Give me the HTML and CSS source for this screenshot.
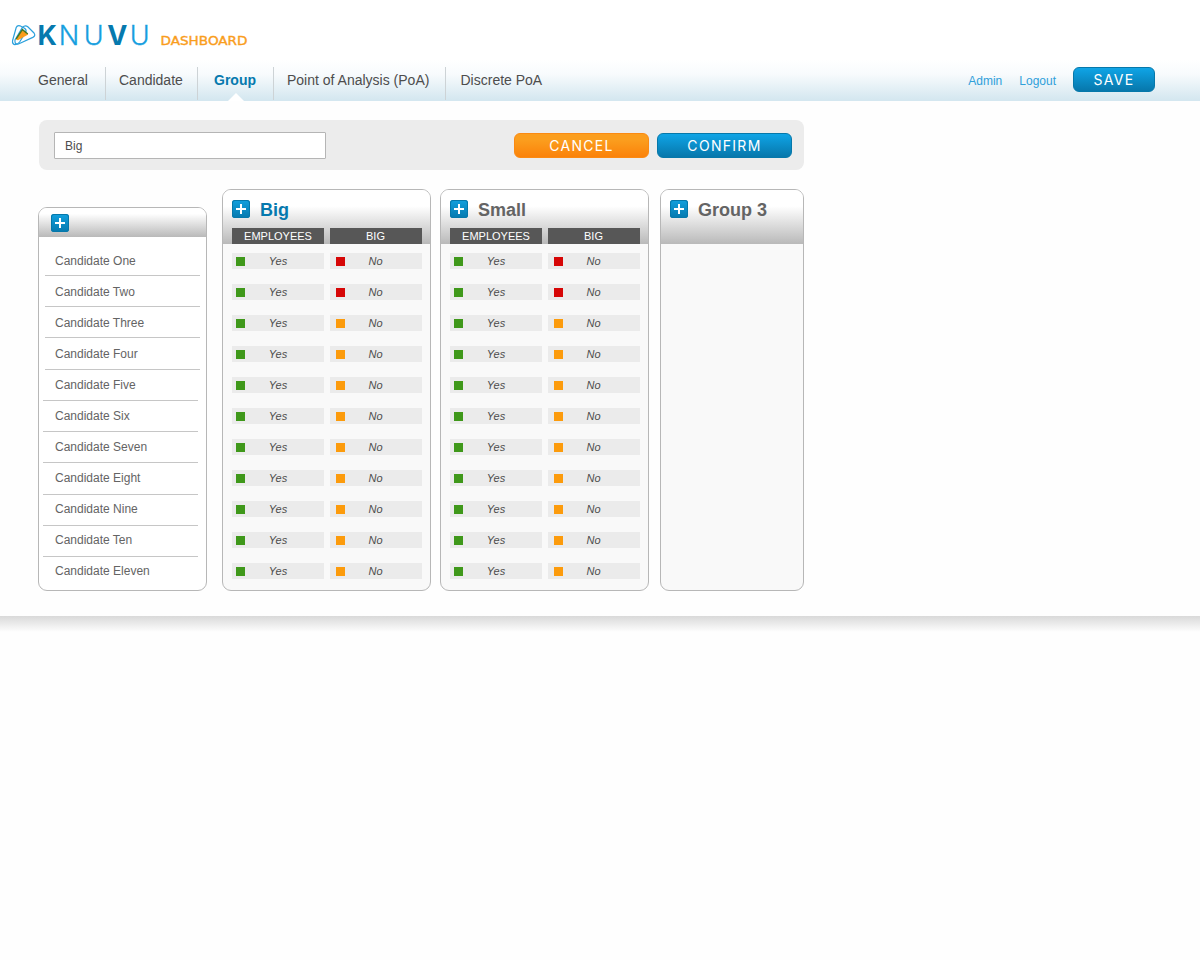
FILE: index.html
```html
<!DOCTYPE html>
<html lang="en">
<head>
<meta charset="utf-8">
<title>Knuvu Dashboard</title>
<link rel="stylesheet" href="styles.css">
</head>
<body>
<svg class="defs" width="0" height="0" aria-hidden="true">
  <symbol id="plus" viewBox="0 0 18 18">
    <path d="M8 4h2v4h4v2h-4v4H8v-4H4V8h4z" fill="#fff"/>
  </symbol>
</svg>
<header class="header">
  <div class="brand">
    <svg width="260" height="64" viewBox="0 0 260 64" role="img">
      <path d="M16.2 27.5Q17.2 25 20 25.8L24.5 28.2Q27 30 25.6 32.4L19.6 42Q17.5 44.8 14.8 44.6Q12 44 12.6 40.5Z" fill="none" stroke="#2aa0dc" stroke-width="1.2"/>
      <path d="M22.4 27.4Q25.2 24.6 27.8 26.8L34 33Q36 35.8 32.8 37.4L18.5 44Q14.4 45 15 40Z" fill="none" stroke="#2aa0dc" stroke-width="1.2"/>
      <path d="M16 39.8L22.2 30.2L28.2 34.4L18 40.2Z" fill="#f99d1c"/>
      <path d="M16.2 38.8L22.4 29.6L27.8 34" fill="none" stroke="#45751f" stroke-width="1.4"/>
      <g class="wordmark">
        <text x="37.5" y="45" class="bold">K</text>
        <text x="58.8" y="45" class="thin">N</text>
        <text x="83.8" y="45" class="thin">U</text>
        <text x="107.3" y="45" class="bold">V</text>
        <text x="129.8" y="45" class="thin">U</text>
      </g>
      <text x="160.5" y="45" class="sub" textLength="87" lengthAdjust="spacingAndGlyphs">DASHBOARD</text>
    </svg>
  </div>
  <div class="navbar">
    <nav class="tabs">
      <a class="tab general">General</a>
      <a class="tab candidate">Candidate</a>
      <a class="tab group active">Group</a>
      <a class="tab poa">Point of Analysis (PoA)</a>
      <a class="tab discrete">Discrete PoA</a>
    </nav>
    <div class="account">
      <a>Admin</a>
      <a>Logout</a>
      <button class="btn blue save">SAVE</button>
    </div>
  </div>
</header>
<main class="content">
  <section class="editbar">
    <input class="name" type="text" value="Big">
    <div class="actions">
      <button class="btn orange">CANCEL</button>
      <button class="btn blue">CONFIRM</button>
    </div>
  </section>
  <section class="board">
    <div class="card people">
      <div class="people-head"><svg class="add"><use href="#plus"/></svg></div>
      <ul class="names">
        <li>Candidate One</li>
        <li>Candidate Two</li>
        <li>Candidate Three</li>
        <li class="tall">Candidate Four</li>
        <li class="left">Candidate Five</li>
        <li class="left">Candidate Six</li>
        <li class="left">Candidate Seven</li>
        <li class="left tall">Candidate Eight</li>
        <li class="left">Candidate Nine</li>
        <li class="left">Candidate Ten</li>
        <li>Candidate Eleven</li>
      </ul>
    </div>
    <div class="card group-card first">
      <div class="head">
        <h2 class="current"><svg class="add"><use href="#plus"/></svg>Big</h2>
        <div class="cols"><span>EMPLOYEES</span><span>BIG</span></div>
      </div>
      <div class="rows">
        <div class="row"><span class="yes">Yes</span><span class="no">No</span></div>
        <div class="row"><span class="yes">Yes</span><span class="no">No</span></div>
        <div class="row"><span class="yes">Yes</span><span class="warn">No</span></div>
        <div class="row"><span class="yes">Yes</span><span class="warn">No</span></div>
        <div class="row"><span class="yes">Yes</span><span class="warn">No</span></div>
        <div class="row"><span class="yes">Yes</span><span class="warn">No</span></div>
        <div class="row"><span class="yes">Yes</span><span class="warn">No</span></div>
        <div class="row"><span class="yes">Yes</span><span class="warn">No</span></div>
        <div class="row"><span class="yes">Yes</span><span class="warn">No</span></div>
        <div class="row"><span class="yes">Yes</span><span class="warn">No</span></div>
        <div class="row"><span class="yes">Yes</span><span class="warn">No</span></div>
      </div>
    </div>
    <div class="card group-card second">
      <div class="head">
        <h2><svg class="add"><use href="#plus"/></svg>Small</h2>
        <div class="cols"><span>EMPLOYEES</span><span>BIG</span></div>
      </div>
      <div class="rows">
        <div class="row"><span class="yes">Yes</span><span class="no">No</span></div>
        <div class="row"><span class="yes">Yes</span><span class="no">No</span></div>
        <div class="row"><span class="yes">Yes</span><span class="warn">No</span></div>
        <div class="row"><span class="yes">Yes</span><span class="warn">No</span></div>
        <div class="row"><span class="yes">Yes</span><span class="warn">No</span></div>
        <div class="row"><span class="yes">Yes</span><span class="warn">No</span></div>
        <div class="row"><span class="yes">Yes</span><span class="warn">No</span></div>
        <div class="row"><span class="yes">Yes</span><span class="warn">No</span></div>
        <div class="row"><span class="yes">Yes</span><span class="warn">No</span></div>
        <div class="row"><span class="yes">Yes</span><span class="warn">No</span></div>
        <div class="row"><span class="yes">Yes</span><span class="warn">No</span></div>
      </div>
    </div>
    <div class="card group-card third">
      <div class="head">
        <h2><svg class="add"><use href="#plus"/></svg>Group 3</h2>
      </div>
    </div>
  </section>
</main>
<footer class="edge"></footer>
</body>
</html>
```
FILE: styles.css
```css
* { box-sizing: border-box; }
body {
  margin: 0;
  min-height: 960px;
  background: #fefefe;
  font-family: "Liberation Sans", Arial, sans-serif;
  color: #4d4d4d;
}
.defs { display: block; }
.header {
  height: 101px;
  background: linear-gradient(#fff 60px, #f8fbfd 74px, #d4e7f0 100px);
}
.brand { height: 67px; }
.brand svg { display: block; }
.wordmark { font-family: Inter, sans-serif; font-size: 27px; }
.wordmark .bold { font-weight: 700; fill: #0679ae; }
.wordmark .thin { font-weight: 300; fill: #169fdf; stroke: #169fdf; stroke-width: .3px; }
.sub { font-family: "DejaVu Sans", sans-serif; font-size: 12.5px; fill: #f99d1c; stroke: #f99d1c; stroke-width: .4px; }

.navbar { display: flex; justify-content: space-between; height: 34px; }
.tabs { display: flex; padding-left: 38px; }
.tab {
  height: 33px;
  padding-top: 5px;
  font-size: 14px;
  line-height: 16px;
  white-space: nowrap;
  border-right: 1px solid #cdd3d6;
}
.general { width: 68px; }
.candidate { width: 92px; padding-left: 13px; }
.group { width: 75px; padding-left: 16px; }
.poa { width: 173px; padding-left: 13px; border-left: 1px solid #cdd3d6; }
.discrete { padding-left: 14.5px; border: 0; }
.tab.active { position: relative; height: 34px; color: #0679ae; font-weight: bold; border: 0; }
.tab.active::after {
  content: "";
  position: absolute;
  left: 30px;
  bottom: 0;
  border: solid transparent;
  border-width: 0 8.5px 8px;
  border-bottom-color: #fff;
}
.account { display: flex; padding-right: 45px; gap: 17px; font-size: 12px; line-height: 28px; color: #2fa0da; }

.btn {
  width: 135px;
  height: 25px;
  padding: 0;
  border-radius: 6px;
  color: #fff;
  font: 14px/24px Inter, sans-serif;
  letter-spacing: 1.3px;
}
.blue { border: 1px solid #0678aa; background: linear-gradient(#0fa4e6, #0777ab); }
.orange { border: 1px solid #fb8a12; background: linear-gradient(#fb9e1e 25%, #fb820a); }
.save { width: 82px; }

.content { width: 804px; height: 515px; padding: 19px 0 0 38px; }
.editbar {
  display: flex;
  align-items: flex-start;
  justify-content: space-between;
  height: 50px;
  margin-left: 1px;
  padding: 12px 12px 0 15px;
  background: #ececec;
  border-radius: 8px;
}
.name {
  width: 272px;
  height: 27px;
  padding: 0 10px;
  border: 1px solid #b5b5b5;
  border-radius: 1px;
  background: #fff;
  color: #4d4d4d;
  font: 12px "Liberation Sans", Arial, sans-serif;
}
.actions { display: flex; gap: 8px; padding-top: 1px; }

.board { display: flex; align-items: flex-end; height: 402px; margin-top: 19px; }
.card { border: 1px solid #b7b7b7; border-radius: 9px; overflow: hidden; }
.add {
  width: 18px;
  height: 18px;
  flex: none;
  border-radius: 3px;
  background: linear-gradient(#12a0de, #0679ae);
  box-shadow: inset 0 0 0 1px #0678aa;
}
.people { width: 169px; height: 384px; background: #fff; }
.people-head {
  display: flex;
  height: 29px;
  padding: 6px 12px;
  background: linear-gradient(#fff 20%, #b9b9b9);
}
.names { margin: 0; padding: 8px 6px 0; list-style: none; font-size: 12px; line-height: 14px; color: #646464; }
.names li { height: 31px; padding: 9px 0 0 10px; border-bottom: 1px solid #c6c6c6; }
.names .tall { height: 32px; }
.names .left { margin: 0 2px 0 -2px; padding: 8px 0 0 12px; }
.names .left.tall + .left, .names .left.tall + .left + .left { padding-top: 7px; }
.names li:last-child { border: 0; padding-top: 7px; }

.group-card { height: 402px; width: 209px; background: #f9f9f9; }
.first { margin-left: 15px; }
.second { margin-left: 9px; }
.third { width: 144px; margin-left: 11px; }
.head { height: 54px; padding: 10px 8px 0 9px; background: linear-gradient(#fff 30%, #b9b9b9); }
.head h2 {
  display: flex;
  align-items: flex-start;
  gap: 10px;
  height: 28px;
  margin: 0;
  font-size: 18px;
  line-height: 20px;
  color: #646464;
}
.head .current { color: #0679ae; }
.cols, .row { display: grid; grid-template-columns: 92px 92px; column-gap: 6px; height: 16px; text-align: center; font-size: 11px; line-height: 16px; }
.cols span { background: #575757; color: #fff; }
.cols span:last-child { padding-right: 1px; }
.rows { display: grid; gap: 15px; padding: 9px 8px 0 9px; }
.row { font-style: italic; }
.row span { background: #ebebeb; display: grid; grid-template-columns: 9px 1fr 9px; align-items: center; padding: 0 4px; }
.row span::before { content: ""; width: 9px; height: 9px; background: #3f981a; margin-top: 1px; }
.row .no, .row .warn { padding-right: 5px; }
.row .no::before, .row .warn::before { background: #d60606; margin-left: 2px; }
.row .warn::before { background: #fc9b0c; }

.edge { height: 16px; background: linear-gradient(#d9d9d9, #fefefe); }
```
